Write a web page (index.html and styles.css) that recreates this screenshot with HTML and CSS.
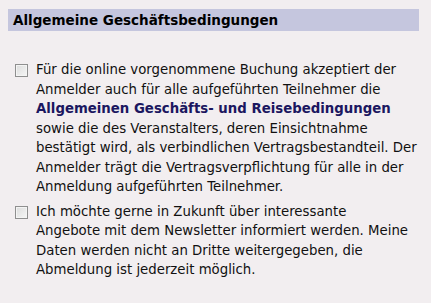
FILE: index.html
```html
<!DOCTYPE html>
<html lang="de">
<head>
<meta charset="utf-8">
<link rel="stylesheet" href="styles.css">
</head>
<body>
<div class="panel">
  <h2 class="panel-title">Allgemeine Geschäftsbedingungen</h2>
  <div class="options">
    <label class="option">
      <input type="checkbox" class="check">
      <span class="option-text">Für die online vorgenommene Buchung akzeptiert der Anmelder auch für alle aufgeführten Teilnehmer die <a class="terms-link" href="#">Allgemeinen Geschäfts- und Reisebedingungen</a> sowie die des Veranstalters, deren Einsichtnahme bestätigt wird, als verbindlichen Vertragsbestandteil. Der Anmelder trägt die Vertragsverpflichtung für alle in der Anmeldung aufgeführten Teilnehmer.</span>
    </label>
    <label class="option">
      <input type="checkbox" class="check">
      <span class="option-text">Ich möchte gerne in Zukunft über interessante<br>Angebote mit dem Newsletter informiert werden. Meine Daten werden nicht an Dritte weitergegeben, die Abmeldung ist jederzeit möglich.</span>
    </label>
  </div>
</div>
</body>
</html>
```

FILE: styles.css
```css
html, body {
  background: #f2eef0;
}
body {
  margin: 8px;
  font-family: "DejaVu Sans", sans-serif;
  font-size: 13.3px;
  color: #111;
}
.panel {
  width: 411px;
}
.panel-title {
  margin: 1px 0 0;
  height: 22px;
  line-height: 22px;
  padding: 0 0 0 5px;
  background: #c5c6de;
  font-size: 13.5px;
  font-weight: bold;
  color: #000;
}
.options {
  display: flex;
  flex-direction: column;
  gap: 5px;
  width: 409px;
  padding: 29px 0 0 7px;
}
.option {
  display: flex;
  align-items: flex-start;
  gap: 8px;
  line-height: 19.5px;
}
.check {
  appearance: none;
  -webkit-appearance: none;
  flex: none;
  width: 13px;
  height: 13px;
  margin: 4px 0 0;
  border: 1px solid #8f8f8f;
  background: linear-gradient(135deg, #dcdcdc 0%, #f6f6f6 100%);
  box-shadow: inset 0 0 0 1px #f4f4f4;
}
.option-text {
  flex: 1;
}
.terms-link {
  font-weight: bold;
  color: #1b1760;
  text-decoration: none;
}
```
